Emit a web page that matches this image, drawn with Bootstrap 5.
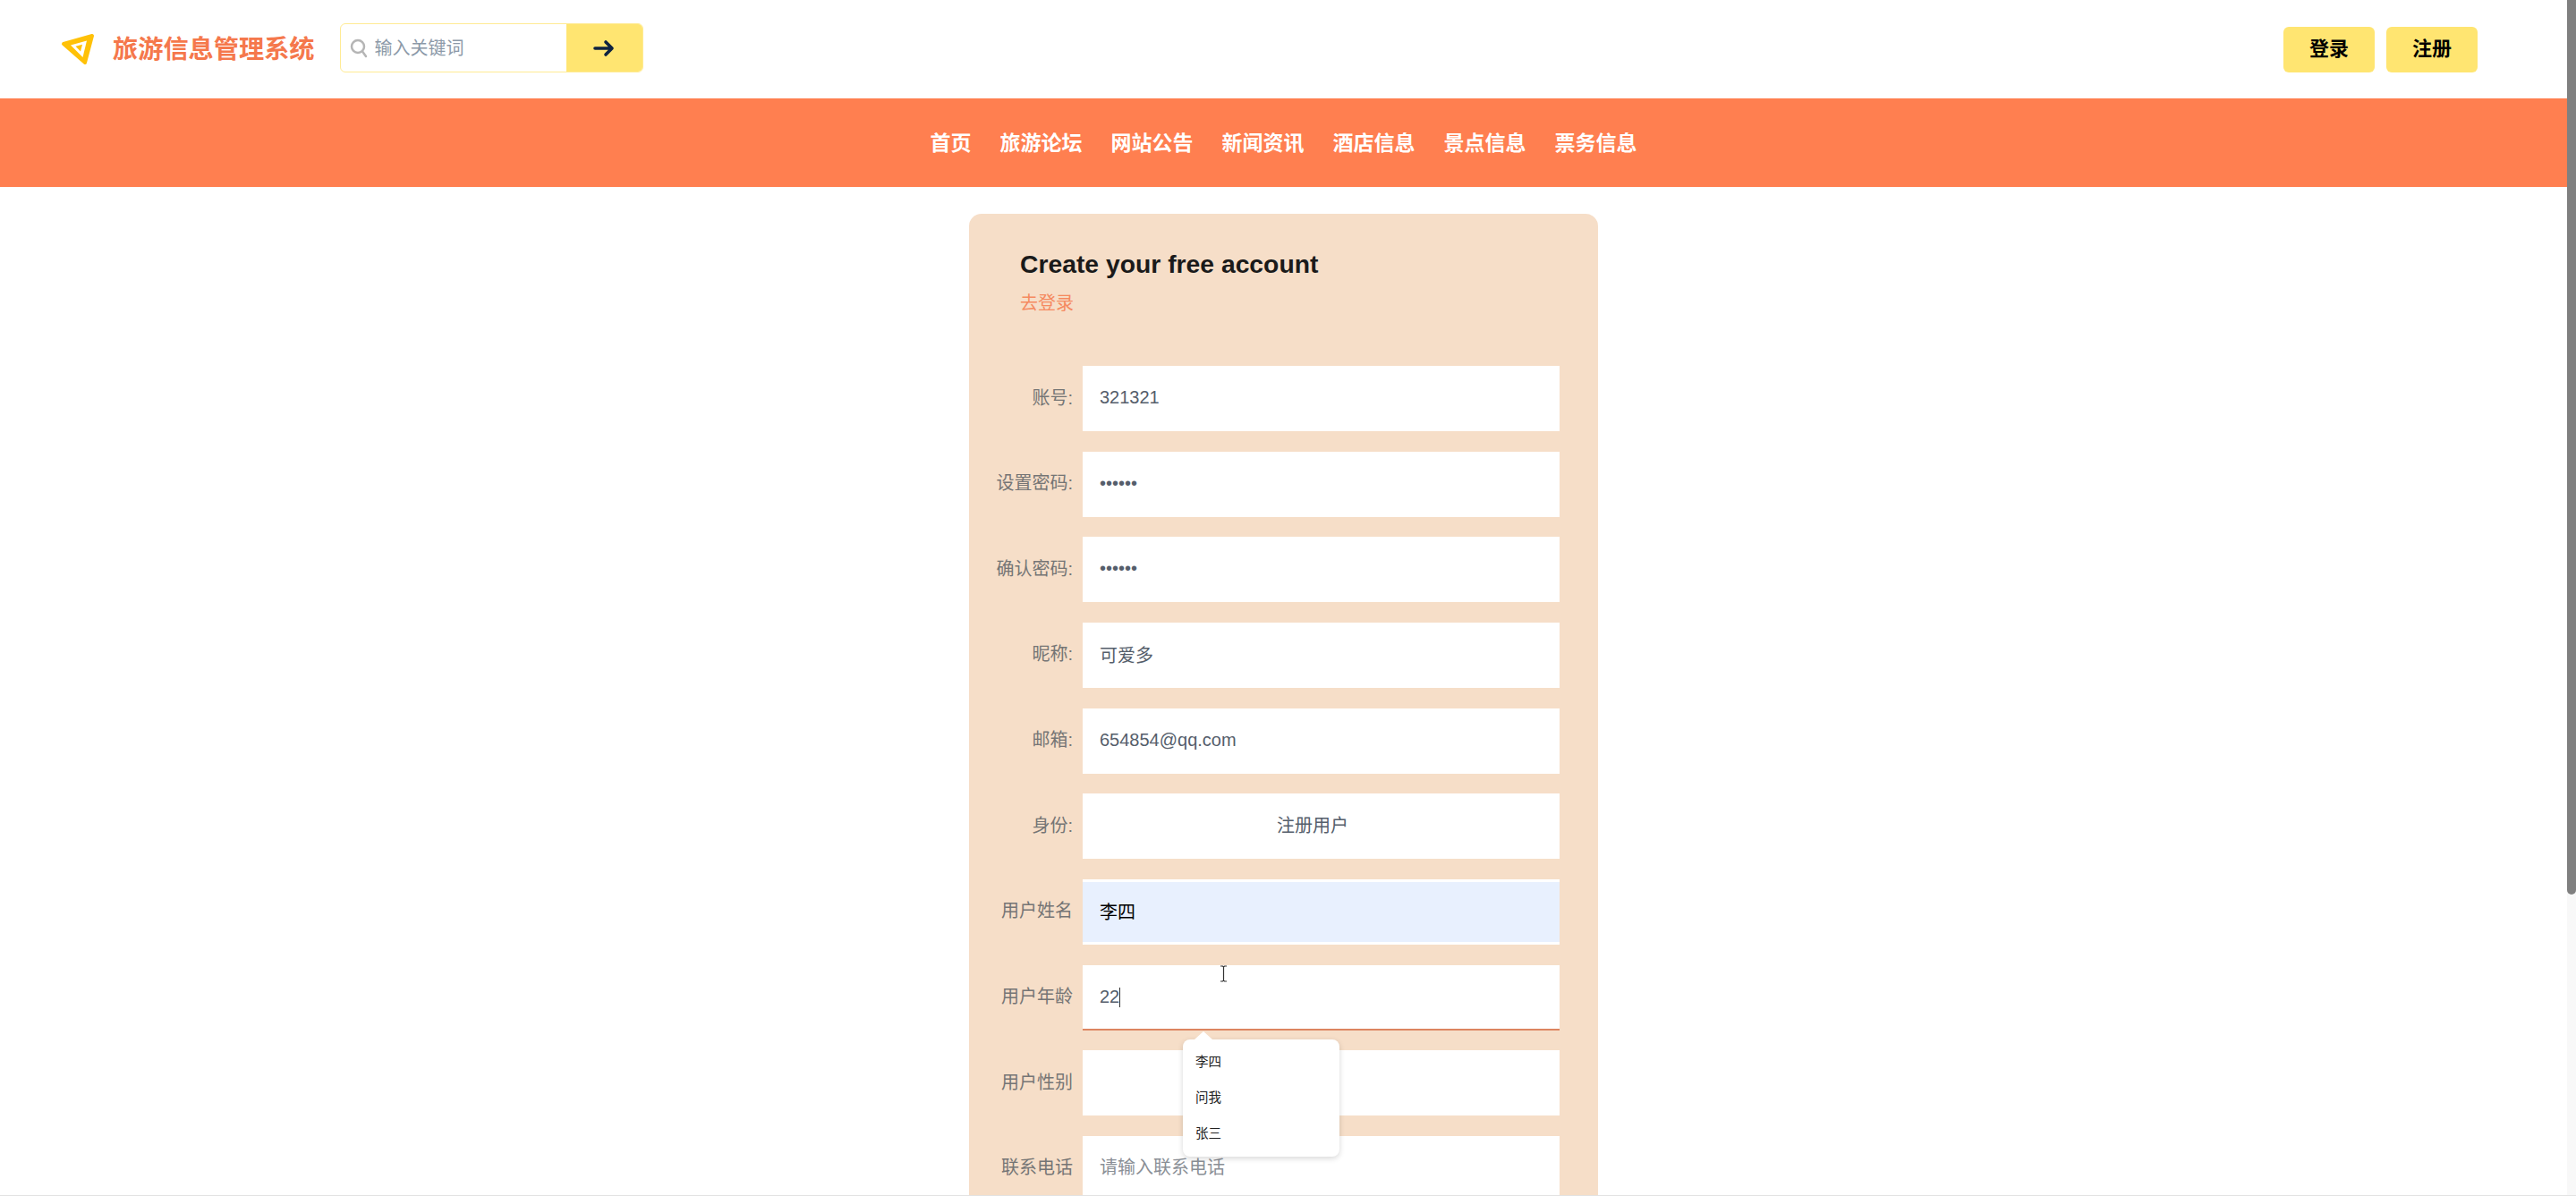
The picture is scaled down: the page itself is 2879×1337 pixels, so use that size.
<!DOCTYPE html>
<html lang="zh">
<head>
<meta charset="utf-8">
<title>旅游信息管理系统</title>
<link href="https://cdn.jsdelivr.net/npm/bootstrap@5.3.0/dist/css/bootstrap.min.css" rel="stylesheet">
<style>
html,body{height:100%;overflow:hidden;}
body{font-family:"Liberation Sans","Noto Sans CJK SC",sans-serif;background:#fff;color:#333;padding-right:10px;}
.top-bar{height:110px;padding:0 100px 0 68px;}
.logo-mark{width:38px;height:36px;flex:none;}
.brand-name{font-size:28.200px;font-weight:700;color:#f5784c;margin-left:20px;line-height:1;white-space:nowrap;}
.search-box{width:339px;height:55px;margin:-3px 0 0 28px;border:1.500px solid #ffeb94;border-radius:6px;overflow:hidden;background:#fff;}
.search-box svg{flex:none;margin-left:10px;}
.search-field{flex:1;min-width:0;border:0;outline:0;background:transparent;font-size:20px;padding:0 0 0 8px;color:#333;}
.search-field::placeholder{color:#8c99a8;}
.search-go{width:85px;background:#ffe571;border:0;padding:0;}
.search-go svg{margin-left:0;}
.head-btn{width:102px;height:51px;background:#ffe571;border:0;border-radius:6px;font-size:22px;font-weight:700;color:#000;padding:0 0 2px;}
.head-btn:hover{background:#ffe571;color:#000;}
.head-actions{gap:13px;}
.main-nav{height:99px;background:#ff7f50;gap:32px;}
.main-nav a{color:#fff;font-size:23px;font-weight:700;text-decoration:none;padding:1px 0 0;line-height:1;}
.reg-card{width:703px;background:#f6dec8;border-radius:14px;margin-top:30px;padding:31px 43px 40px 0;}
.reg-title{font-size:28.300px;font-weight:700;color:#1a1a1a;margin:0 0 0 57px;line-height:50px;}
.reg-login{display:block;font-size:20px;line-height:30px;color:#f58a60;text-decoration:none;margin:4px 0 55px 57px;}
.reg-row{height:73px;margin-bottom:22.670px;position:relative;}
.reg-label{width:116px;padding:0 0 2px;margin:0 11px 0 0;text-align:right;font-size:20px;color:#757575;white-space:nowrap;flex:none;}
.reg-field{flex:1;min-width:0;height:73px;border:0;border-radius:0;background:#fff;font-size:20px;color:#555e6b;padding:0 20px 2px 19px;outline:0;}
.reg-field::placeholder{color:#8a8f96;}
select.reg-field{text-align:center;appearance:none;padding-right:38px;}
.is-autofill{box-shadow:inset 0 3px 0 #fff,inset 0 -3px 0 #fff;background:#e8f0fe;color:#000;}
.is-active{border-bottom:2px solid #dd8560;padding-bottom:0;}
.typing-caret{position:absolute;left:168px;top:25px;width:1px;height:22px;background:#333;}
.ibeam{position:absolute;left:280px;top:0;width:9px;height:19px;}
.pick-menu{position:absolute;left:239px;top:83px;width:175px;height:131px;background:#fff;border-radius:8px;box-shadow:0 2px 6px rgba(0,0,0,.16);padding:5px 0;z-index:5;}
.pick-menu::before{content:"";position:absolute;left:13px;top:-9px;border:10px solid transparent;border-top:0;border-bottom:9px solid #fff;}
.pick-item{height:40px;line-height:40px;padding:0 14px;font-size:14.500px;color:#222;}
.page-edge{position:fixed;left:0;right:0;bottom:0;height:1px;background:#e2e2e2;z-index:10;}
.fake-track{position:fixed;top:0;right:0;bottom:0;width:10px;background:#f8f8f8;z-index:9;}
.fake-thumb{height:1000px;background:#808080;border-radius:0 0 6px 6px;}
</style>
</head>
<body>
<header class="top-bar d-flex align-items-center">
  <svg class="logo-mark" viewBox="0 0 38 36" aria-hidden="true">
    <polygon points="3,12 35,3 27,33" fill="#ffc107" stroke="#ffc107" stroke-width="4" stroke-linejoin="round"/>
    <polygon points="11,13.500 29,8.500 24.500,27" fill="#fff"/>
    <polygon points="16.500,14.800 24,12.800 22,20.500" fill="#ffc107"/>
  </svg>
  <span class="brand-name">旅游信息管理系统</span>
  <form class="search-box d-flex align-items-stretch">
    <span class="d-flex align-items-center"><svg width="20" height="22" viewBox="0 0 20 22" aria-hidden="true"><circle cx="9" cy="9" r="7" fill="none" stroke="#b5b5b5" stroke-width="2.500"/><line x1="14" y1="14.500" x2="18" y2="20" stroke="#b5b5b5" stroke-width="2.500" stroke-linecap="round"/></svg></span>
    <input class="search-field" type="text" placeholder="输入关键词">
    <button class="search-go d-flex align-items-center justify-content-center" type="button" aria-label="搜索"><svg width="24" height="20" viewBox="0 0 24 20" aria-hidden="true"><path d="M2 10H21M14 3L21 10L14 17" fill="none" stroke="#0e2240" stroke-width="3.600" stroke-linecap="round" stroke-linejoin="round"/></svg></button>
  </form>
  <div class="ms-auto d-flex head-actions">
    <button class="btn head-btn" type="button">登录</button>
    <button class="btn head-btn" type="button">注册</button>
  </div>
</header>
<nav class="main-nav nav justify-content-center align-items-center">
  <a class="nav-link" href="#">首页</a>
  <a class="nav-link" href="#">旅游论坛</a>
  <a class="nav-link" href="#">网站公告</a>
  <a class="nav-link" href="#">新闻资讯</a>
  <a class="nav-link" href="#">酒店信息</a>
  <a class="nav-link" href="#">景点信息</a>
  <a class="nav-link" href="#">票务信息</a>
</nav>
<main class="reg-card mx-auto">
  <h1 class="reg-title">Create your free account</h1>
  <a class="reg-login" href="#">去登录</a>
  <form>
    <div class="reg-row d-flex align-items-center"><label class="reg-label">账号:</label><input class="reg-field" type="text" value="321321"></div>
    <div class="reg-row d-flex align-items-center"><label class="reg-label">设置密码:</label><input class="reg-field" type="password" value="123456"></div>
    <div class="reg-row d-flex align-items-center"><label class="reg-label">确认密码:</label><input class="reg-field" type="password" value="123456"></div>
    <div class="reg-row d-flex align-items-center"><label class="reg-label">昵称:</label><input class="reg-field" type="text" value="可爱多"></div>
    <div class="reg-row d-flex align-items-center"><label class="reg-label">邮箱:</label><input class="reg-field" type="text" value="654854@qq.com"></div>
    <div class="reg-row d-flex align-items-center"><label class="reg-label">身份:</label><select class="reg-field"><option>注册用户</option></select></div>
    <div class="reg-row d-flex align-items-center"><label class="reg-label">用户姓名</label><input class="reg-field is-autofill" type="text" value="李四"></div>
    <div class="reg-row d-flex align-items-center"><label class="reg-label">用户年龄</label><input class="reg-field is-active" type="text" value="22">
      <span class="typing-caret"></span>
      <svg class="ibeam" viewBox="0 0 9 19" aria-hidden="true"><path d="M1 1H3.500L4.500 2L5.500 1H8M4.500 2V17M1 18H3.500L4.500 17L5.500 18H8" fill="none" stroke="#333" stroke-width="1.200"/></svg>
      <div class="pick-menu"><div class="pick-item">李四</div><div class="pick-item">问我</div><div class="pick-item">张三</div></div>
    </div>
    <div class="reg-row d-flex align-items-center"><label class="reg-label">用户性别</label><input class="reg-field" type="text"></div>
    <div class="reg-row d-flex align-items-center"><label class="reg-label">联系电话</label><input class="reg-field" type="text" placeholder="请输入联系电话"></div>
  </form>
</main>
<div class="fake-track"><div class="fake-thumb"></div></div>
<div class="page-edge"></div>
</body>
</html>
